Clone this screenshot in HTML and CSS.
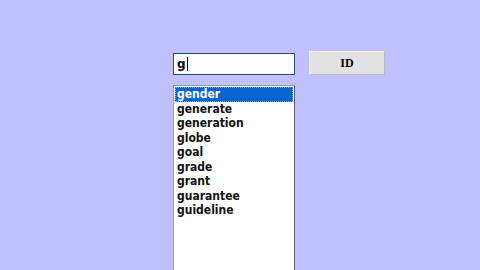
FILE: index.html
```html
<!DOCTYPE html>
<html>
<head>
    <title>Word Lookup</title>
    <link rel="stylesheet" href="styles.css">
</head>
<body>
    <div class="lookup">
        <div class="search-box">g<span class="caret"></span></div>
        <div class="id-button">ID</div>
        <div class="word-list">
            <div class="word selected">gender</div>
            <div class="word">generate</div>
            <div class="word">generation</div>
            <div class="word">globe</div>
            <div class="word">goal</div>
            <div class="word">grade</div>
            <div class="word">grant</div>
            <div class="word">guarantee</div>
            <div class="word">guideline</div>
        </div>
    </div>
</body>
</html>
```

FILE: styles.css
```css
body {
    margin: 0;
    padding: 0;
    background: #c0c0ff;
    overflow: hidden;
    height: 270px;
    font-family: "DejaVu Sans", Tahoma, sans-serif;
}

.lookup {
    display: grid;
    grid-template-columns: 122px 76px;
    column-gap: 14px;
    align-items: start;
    padding: 51px 0 0 173px;
}

.search-box {
    margin-top: 2px;
    height: 22px;
    box-sizing: border-box;
    border: 1px solid #1f4f7c;
    background: #fff;
    color: #000;
    font-size: 12px;
    font-weight: bold;
    line-height: 20px;
    padding-left: 3px;
    display: flex;
    align-items: center;
}

.caret {
    display: inline-block;
    width: 1px;
    height: 14px;
    background: #000;
    margin-left: 1px;
}

.id-button {
    height: 24px;
    box-sizing: border-box;
    border: 1px solid #f0f0f0;
    border-right-color: #b8b8c8;
    border-bottom-color: #b8b8c8;
    background: #e2e2e2;
    font-family: "Liberation Serif", "Times New Roman", serif;
    font-weight: bold;
    font-size: 12px;
    display: flex;
    align-items: center;
    justify-content: center;
}

.word-list {
    grid-column: 1;
    margin-top: 10px;
    height: 185px;
    box-sizing: border-box;
    border: 1px solid #9c9cb0;
    border-right-color: #5a5a70;
    border-bottom: none;
    background: #fff;
    padding: 1px 1px 0 1px;
}

.word {
    font-family: "DejaVu Sans Condensed", "DejaVu Sans", sans-serif;
    font-size: 12px;
    font-weight: bold;
    line-height: 14.5px;
    height: 14.5px;
    color: #111;
    padding-left: 2px;
}

.word.selected {
    background: #0a64d0;
    color: #fff;
    outline: 1px dotted #6ab0ff;
    outline-offset: -1px;
}
```
